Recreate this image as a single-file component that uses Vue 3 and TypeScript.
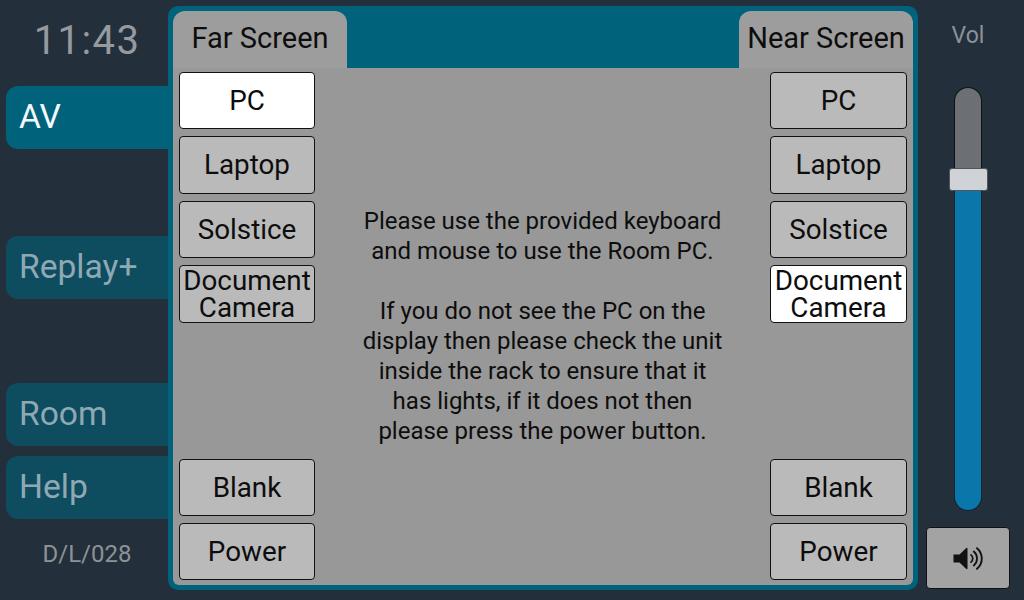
<script setup lang="ts">
const leftSources: { label: string; active: boolean }[] = [
  { label: 'PC', active: true },
  { label: 'Laptop', active: false },
  { label: 'Solstice', active: false },
  { label: 'Document Camera', active: false },
]
const rightSources: { label: string; active: boolean }[] = [
  { label: 'PC', active: false },
  { label: 'Laptop', active: false },
  { label: 'Solstice', active: false },
  { label: 'Document Camera', active: true },
]
const controls = ['Blank', 'Power']
</script>

<template>
  <div class="screen">
    <aside class="side">
      <div class="clock">11:43</div>
      <div class="nav active n-av">AV</div>
      <div class="nav n-replay">Replay+</div>
      <div class="nav n-room">Room</div>
      <div class="nav n-help">Help</div>
      <div class="room-id">D/L/028</div>
    </aside>

    <main class="panel">
      <div class="inner">
        <header class="tabs">
          <div class="tab">Far Screen</div>
          <div class="tab">Near Screen</div>
        </header>
        <div class="body">
          <div class="col col-left">
            <div class="group">
              <button v-for="s in leftSources" :key="s.label" class="btn" :class="{ on: s.active }">{{ s.label }}</button>
            </div>
            <div class="group">
              <button v-for="c in controls" :key="c" class="btn ctl">{{ c }}</button>
            </div>
          </div>
          <div class="message">
            <p>Please use the provided keyboard<br />and mouse to use the Room PC.</p>
            <p>If you do not see the PC on the<br />display then please check the unit<br />inside the rack to ensure that it<br />has lights, if it does not then<br />please press the power button.</p>
          </div>
          <div class="col">
            <div class="group">
              <button v-for="s in rightSources" :key="s.label" class="btn" :class="{ on: s.active }">{{ s.label }}</button>
            </div>
            <div class="group">
              <button v-for="c in controls" :key="c" class="btn ctl">{{ c }}</button>
            </div>
          </div>
        </div>
      </div>
    </main>

    <aside class="vol">
      <div class="vol-label">Vol</div>
      <div class="slider">
        <div class="track-off"></div>
        <div class="track-on"></div>
        <div class="thumb"></div>
      </div>
      <button class="mute" aria-label="Volume">
        <svg width="30" height="23" viewBox="0 0 30 23">
          <path d="M0.500 7.500H6.500L13 1.200Q14.500 0 14.500 2V21Q14.500 23 13 21.800L6.500 15.500H0.500Z" fill="#111" />
          <path d="M18 7.800a4.800 4.800 0 0 1 0 7.400" fill="none" stroke="#111" stroke-width="1.700" stroke-linecap="round" />
          <path d="M20.800 4.500a9.200 9.200 0 0 1 0 14" fill="none" stroke="#111" stroke-width="1.800" stroke-linecap="round" />
          <path d="M24 1.200a13.500 13.500 0 0 1 0 20.600" fill="none" stroke="#111" stroke-width="1.900" stroke-linecap="round" />
        </svg>
      </button>
    </aside>
  </div>
</template>

<style>
html, body { margin: 0; background: #232f3b; }
</style>

<style scoped>
.screen {
  width: 1024px;
  height: 600px;
  display: flex;
  background: #232f3b;
  font-family: Roboto, "Liberation Sans", sans-serif;
  overflow: hidden;
}
.side {
  width: 168px;
  flex: none;
  display: flex;
  flex-direction: column;
  padding-left: 6px;
  box-sizing: border-box;
}
.clock {
  height: 80px;
  line-height: 82px;
  text-align: center;
  font-size: 40px;
  color: #969a9f;
  letter-spacing: 1.400px;
}
.nav {
  height: 63px;
  flex: none;
  background: #0e4c60;
  border-radius: 12px 0 0 12px;
  padding-left: 13px;
  line-height: 61px;
  font-size: 33.600px;
  color: #8fa9b4;
  box-sizing: border-box;
}
.nav.active { background: #00627b; color: #f4f8fa; }
.n-av { margin-top: 6px; }
.n-replay { margin-top: 87px; }
.n-room { margin-top: 84px; }
.n-help { margin-top: 10px; }
.room-id {
  margin-top: 20px;
  text-align: center;
  font-size: 24px;
  line-height: 30px;
  color: #8d9298;
}
.panel {
  width: 750px;
  height: 584px;
  margin-top: 6px;
  flex: none;
  background: #00627b;
  border-radius: 10px;
  padding: 5px;
  box-sizing: border-box;
}
.inner {
  height: 100%;
  display: flex;
  flex-direction: column;
}
.tabs {
  height: 57px;
  flex: none;
  display: flex;
  justify-content: space-between;
}
.tab {
  width: 174px;
  background: #9d9d9d;
  border-radius: 12px 12px 0 0;
  font-size: 29px;
  line-height: 55px;
  text-align: center;
  color: #0d0d0d;
}
.body {
  flex: 1;
  min-height: 0;
  display: flex;
  justify-content: space-between;
  padding: 4px 6px 5px;
  background: #989898;
  border-radius: 0 0 6px 6px;
}
.col {
  width: 137px;
  flex: none;
  display: flex;
  flex-direction: column;
  justify-content: space-between;
}
.col-left { width: 136px; }
.group {
  display: flex;
  flex-direction: column;
  gap: 7px;
}
.btn {
  height: 57.400px;
  width: 100%;
  margin: 0;
  padding: 0 2px 0.500px;
  box-sizing: border-box;
  border: 1px solid #111;
  border-radius: 4px;
  background: #bababa;
  font-family: inherit;
  font-size: 27.800px;
  line-height: 27px;
  color: #0d0d0d;
}
.btn.ctl { height: 57px; }
.btn.on { background: #fff; }
.message {
  flex: 1;
  text-align: center;
  font-size: 24px;
  line-height: 30px;
  color: #0d0d0d;
  padding-top: 134px;
}
.message p { margin: 0 0 30px; }
.vol {
  flex: 1;
  display: flex;
  flex-direction: column;
  align-items: center;
  padding-right: 6px;
}
.vol-label {
  margin-top: 21px;
  height: 30px;
  line-height: 30px;
  font-size: 23px;
  color: #8d9298;
}
.slider {
  position: relative;
  width: 28px;
  height: 424px;
  margin-top: 36px;
  display: flex;
  flex-direction: column;
}
.track-off {
  height: 88px;
  background: #6c7074;
  border: 1px solid #111;
  border-bottom: 0;
  border-radius: 14px 14px 0 0;
  box-sizing: border-box;
}
.track-on {
  flex: 1;
  background: #0a77aa;
  border: 1px solid #123;
  border-top: 0;
  border-radius: 0 0 14px 14px;
  box-sizing: border-box;
}
.thumb {
  position: absolute;
  left: -5px;
  top: 81px;
  width: 39px;
  height: 23px;
  background: #cfd2d6;
  border: 1px solid #555;
  border-radius: 3px;
  box-sizing: border-box;
}
.mute {
  margin-top: 16px;
  width: 84px;
  height: 62px;
  padding: 0;
  border: 1px solid #111;
  border-radius: 4px;
  background: #a3a3a3;
  display: flex;
  align-items: center;
  justify-content: center;
}
</style>
